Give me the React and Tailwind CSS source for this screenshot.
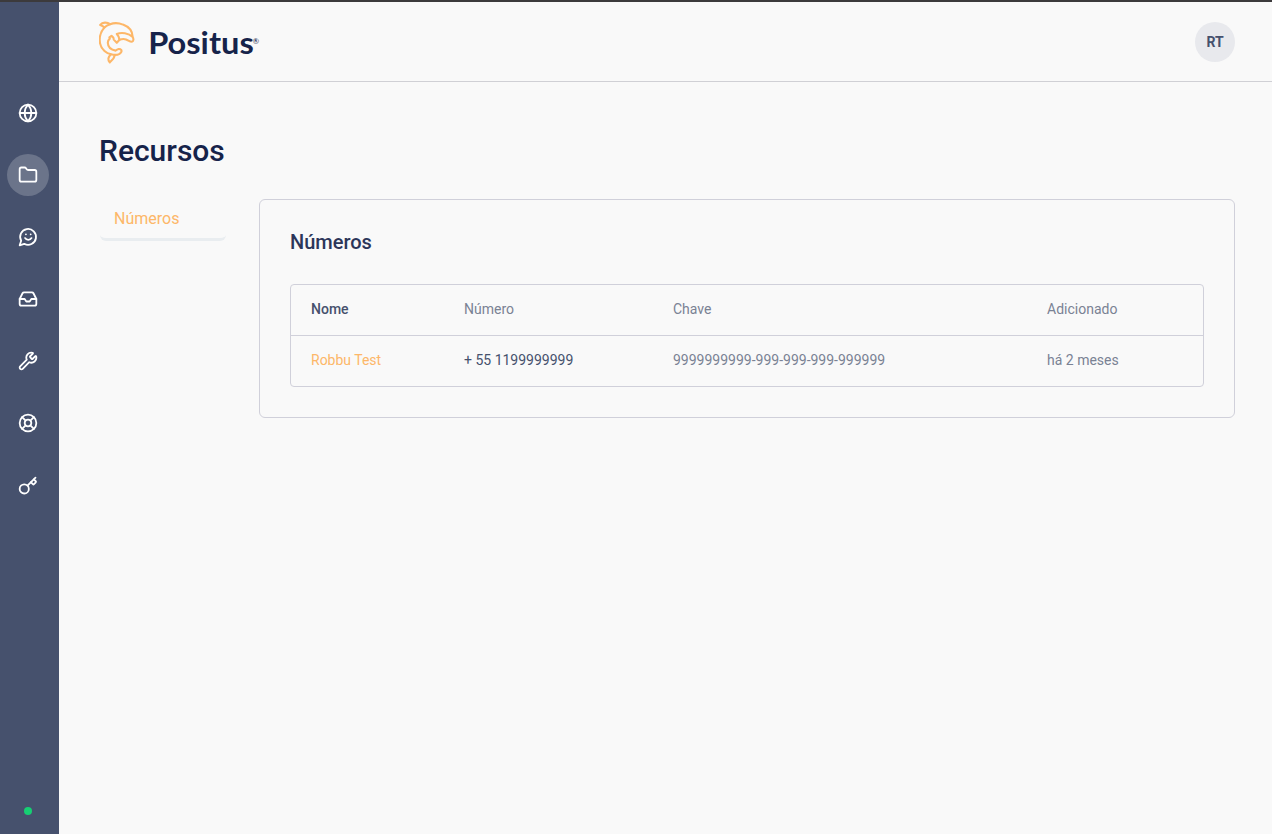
import { Globe, Folder, Inbox, Wrench, LifeBuoy, Key } from "lucide-react";

function Dolphin() {
  return (
    <svg className="h-[44px] w-[38px] shrink-0" viewBox="0 0 38 44" fill="none" stroke="#fdb768" strokeWidth="2.1" strokeLinejoin="round" strokeLinecap="round">
      <path d="M11 3.2C15 1.8 20 2 24 3.600C30 5.800 33.500 10.500 33.700 16C34.700 17.800 34.700 19.900 33.200 20.600C31.400 21.200 29.500 19.300 27 18.400C24.500 17.500 22.500 18 20.500 18.800C20.300 16.500 19.300 14.500 17.800 13C22.500 11.200 29.500 12 33.700 16" />
      <path d="M11 3.2C8 0.900 3.500 1.100 1.200 3.900C3 4.400 4.400 5.200 5.400 6.500" />
      <path d="M11 3.200C9 3.900 7 5 5.400 6.500C-0.800 13.500 -1 24 5.500 30C7.500 31.800 9.800 32.800 12 33.300C15 34 18.500 34 20.500 32.800C22.400 31.600 22.900 30 22.200 28.900C20.800 27.200 18.400 28 16.700 29.600C12 29 9 26 8.800 21.800C8.800 19.800 9.600 18.600 10.800 17.600L10.400 16.400L12.500 14.900L14.300 16.500L14.800 18.600L17.800 21.800L20.500 18.800" />
      <path d="M11.800 33.500C9 36 8.500 39 10.800 41.400C12.500 39.500 15.500 37.500 15.600 34.200" />
    </svg>
  );
}

function ChatSmile({ size = 20, strokeWidth = 2 }) {
  return (
    <svg width={size} height={size} viewBox="0 0 24 24" fill="none" stroke="currentColor" strokeWidth={strokeWidth} strokeLinecap="round" strokeLinejoin="round">
      <path d="M2 22 3.800 16.500A9.500 9.500 0 1 1 7.500 20.200Z" />
      <path d="M8.500 13.300c1.700 2.700 6 2.700 7.700 0" />
      <path d="M9.500 8.800h.01M15.200 8.800h.01" />
    </svg>
  );
}

const navItems = [
  { label: "Início", Icon: Globe },
  { label: "Recursos", Icon: Folder, active: true },
  { label: "Conversas", Icon: ChatSmile },
  { label: "Caixa de entrada", Icon: Inbox },
  { label: "Ferramentas", Icon: Wrench },
  { label: "Suporte", Icon: LifeBuoy },
  { label: "Chaves", Icon: Key },
];

function Sidebar() {
  return (
    <aside className="flex w-[59px] shrink-0 flex-col items-center bg-[#46516d] pt-[90px] pr-[3px] pb-[19px]">
      <nav className="flex flex-col gap-[20.1px]">
        {navItems.map(({ label, Icon, active }) => (
          <a
            key={label}
            aria-label={label}
            className={`flex size-[42px] items-center justify-center rounded-full text-white ${active ? "bg-[#6b748a]" : ""}`}
          >
            <Icon size={20} strokeWidth={2.15} />
          </a>
        ))}
      </nav>
      <span className="mt-auto size-2 rounded-full bg-[#16cf73]" />
    </aside>
  );
}

function Header() {
  return (
    <header className="flex h-[80px] shrink-0 items-center justify-between border-b border-[#d0d0d5] pr-[37px] pl-[40px]">
      <div className="flex items-center pt-[2px] text-[#16234a]">
        <Dolphin />
        <svg className="ml-[12px] h-[44px] w-[112px]" viewBox="0 0 112 44" fill="currentColor">
          <text x="-0.8" y="33" fontSize="29.500" fontWeight="700" fontFamily="Lato, sans-serif" textLength="105.500" lengthAdjust="spacingAndGlyphs">Positus</text>
          <text x="103.500" y="23" fontSize="8" fontFamily="Lato, sans-serif">®</text>
        </svg>
      </div>
      <div className="flex size-10 items-center justify-center rounded-full bg-[#e8e9ed] text-sm font-bold text-[#46516d]">RT</div>
    </header>
  );
}

export default function App() {
  return (
    <div className="flex h-[834px] w-[1272px] flex-col overflow-hidden border-t-2 border-[#3c3a3c] bg-[#f9f9f9] font-['Roboto',sans-serif]">
      <div className="flex min-h-0 grow">
        <Sidebar />
        <div className="flex grow flex-col">
          <Header />
          <main className="pt-[47px] pr-[37px] pl-[40px]">
            <h1 className="text-[30px] leading-[43px] font-medium text-[#16234a]">Recursos</h1>
            <div className="mt-[27px] flex items-start">
              <nav className="w-[160px] shrink-0 pl-px">
                <a className="block w-[126px] rounded-md border-b-[3px] border-[#e9edf0] pt-[8px] pb-[7px] pl-[14px] text-base leading-6 text-[#fdb768]">Números</a>
              </nav>
              <section className="h-[219px] grow rounded-md border border-[#d0d0da] px-[30px] pt-[27px]">
                <h2 className="text-xl leading-[30px] font-medium text-[#2c3659]">Números</h2>
                <div className="mt-[27px] rounded border border-[#d0d0da] text-sm text-[#7a8294]">
                  <div className="grid h-[51px] grid-cols-[153px_209px_374px_1fr] items-center border-b border-[#d0d0da] pb-[2px] pl-5">
                    <span className="font-medium text-[#46516d]">Nome</span>
                    <span>Número</span>
                    <span>Chave</span>
                    <span>Adicionado</span>
                  </div>
                  <div className="grid h-[50px] grid-cols-[153px_209px_374px_1fr] items-center pb-[2px] pl-5">
                    <span className="text-[#fdb768]">Robbu Test</span>
                    <span className="text-[#46516d]">+ 55 1199999999</span>
                    <span>9999999999-999-999-999-999999</span>
                    <span>há 2 meses</span>
                  </div>
                </div>
              </section>
            </div>
          </main>
        </div>
      </div>
    </div>
  );
}
